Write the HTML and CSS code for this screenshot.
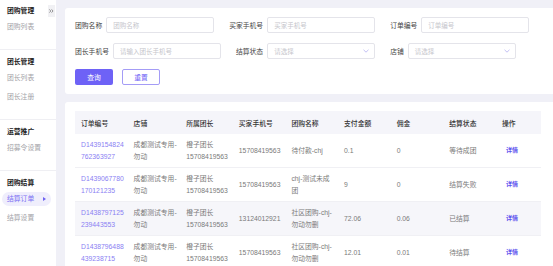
FILE: index.html
```html
<!DOCTYPE html>
<html lang="zh-CN">
<head>
  <meta charset="UTF-8">
  <title>结算订单</title>
  <link rel="stylesheet" href="styles.css">
</head>
<body>
  <!-- Sidebar -->
  <aside class="sidebar">
    <span class="collapse"><svg width="5" height="4" viewBox="0 0 5 4"><polyline points="0.4,0.4 1.8,2 0.4,3.6" fill="none" stroke="#555" stroke-width="0.6"/><polyline points="2.6,0.4 4,2 2.6,3.6" fill="none" stroke="#555" stroke-width="0.6"/></svg></span>
    <div class="nav-group">
      <div class="nav-title">团购管理</div>
      <div class="nav-item">团购列表</div>
    </div>
    <div class="nav-group">
      <div class="nav-title">团长管理</div>
      <div class="nav-item">团长列表</div>
      <div class="nav-item">团长注册</div>
    </div>
    <div class="nav-group">
      <div class="nav-title">运营推广</div>
      <div class="nav-item">招募令设置</div>
    </div>
    <div class="nav-group last">
      <div class="nav-title">团购结算</div>
      <div class="nav-item active">结算订单<span class="arrow"></span></div>
      <div class="nav-item">结算设置</div>
    </div>
  </aside>

  <main class="main">
    <!-- Search form -->
    <div class="card search">
      <div class="form-row">
        <div class="field"><label>团购名称</label><input placeholder="团购名称"></div>
        <div class="field"><label>买家手机号</label><input placeholder="买家手机号"></div>
        <div class="field"><label>订单编号</label><input placeholder="订单编号"></div>
      </div>
      <div class="form-row">
        <div class="field"><label>团长手机号</label><input placeholder="请输入团长手机号"></div>
        <div class="field">
          <label>结算状态</label>
          <div class="select">请选择<svg width="6" height="4" viewBox="0 0 6 4"><polyline points="0.5,0.8 3,3.2 5.5,0.8" fill="none" stroke="#b3aef0" stroke-width="0.8"/></svg></div>
        </div>
        <div class="field">
          <label>店铺</label>
          <div class="select">请选择<svg width="6" height="4" viewBox="0 0 6 4"><polyline points="0.5,0.8 3,3.2 5.5,0.8" fill="none" stroke="#b3aef0" stroke-width="0.8"/></svg></div>
        </div>
      </div>
      <div class="actions">
        <button class="btn primary">查询</button>
        <button class="btn ghost">重置</button>
      </div>
    </div>

    <!-- Result table -->
    <div class="card list">
      <table class="orders">
        <colgroup>
          <col><col><col><col><col><col><col><col><col class="op">
        </colgroup>
        <thead>
          <tr>
            <th>订单编号</th><th>店铺</th><th>所属团长</th><th>买家手机号</th><th>团购名称</th>
            <th>支付金额</th><th>佣金</th><th>结算状态</th><th>操作</th>
          </tr>
        </thead>
        <tbody>
          <tr>
            <td class="no">D1439154824762363927</td>
            <td>成都测试专用-勿动</td>
            <td>橙子团长<br>15708419563</td>
            <td>15708419563</td>
            <td>待付款-chj</td>
            <td>0.1</td>
            <td>0</td>
            <td>等待成团</td>
            <td><a class="link">详情</a></td>
          </tr>
          <tr>
            <td class="no">D1439067780170121235</td>
            <td>成都测试专用-勿动</td>
            <td>橙子团长<br>15708419563</td>
            <td>15708419563</td>
            <td>chj-测试未成团</td>
            <td>9</td>
            <td>0</td>
            <td>结算失败</td>
            <td><a class="link">详情</a></td>
          </tr>
          <tr class="stripe">
            <td class="no">D1438797125239443553</td>
            <td>成都测试专用-勿动</td>
            <td>橙子团长<br>15708419563</td>
            <td>13124012921</td>
            <td>社区团购-chj-勿动勿删</td>
            <td>72.06</td>
            <td>0.06</td>
            <td>已结算</td>
            <td><a class="link">详情</a></td>
          </tr>
          <tr>
            <td class="no">D1438796488439238715</td>
            <td>成都测试专用-勿动</td>
            <td>橙子团长<br>15708419563</td>
            <td>15708419563</td>
            <td>社区团购-chj-勿动勿删</td>
            <td>12.01</td>
            <td>0.01</td>
            <td>待结算</td>
            <td><a class="link">详情</a></td>
          </tr>
        </tbody>
      </table>
    </div>
  </main>
</body>
</html>
```

FILE: styles.css
```css
/* page layout */
body {
  margin: 0;
  display: flex;
  height: 100vh;
  overflow: hidden;
  background-color: #f0f0f7;
  font-family: "Liberation Sans", "Noto Sans CJK SC", sans-serif;
  font-size: 6.8px;
  color: #666;
}

.sidebar {
  position: relative;
  width: 56px;
  flex-shrink: 0;
  background-color: #fff;
}

.collapse {
  position: absolute;
  top: 5px;
  left: 48px;
  width: 7px;
  height: 12px;
  display: flex;
  align-items: center;
  justify-content: center;
  background-color: #f1f1f4;
}

.nav-group {
  padding: 6px 0 10px;
  border-bottom: 1px solid #efeff3;
}

.collapse + .nav-group {
  padding-top: 5px;
}

.nav-group.last {
  border-bottom: none;
}

.nav-title {
  line-height: 12px;
  margin: 0 0 3px 7px;
  font-weight: bold;
  color: #222;
}

.nav-item {
  position: relative;
  height: 14px;
  line-height: 14px;
  margin: 0 5px 5px 2px;
  padding-left: 5px;
  border-radius: 7px;
  color: #a3a3a8;
}

.nav-item.active {
  background-color: #efeefc;
  color: #7b6ff3;
}

.arrow {
  position: absolute;
  right: 5px;
  top: 5px;
  border-top: 2px solid transparent;
  border-bottom: 2px solid transparent;
  border-left: 3px solid #6d61f2;
}

.main {
  flex: 1;
  padding: 8px 0 0 9px;
  display: flex;
  flex-direction: column;
  gap: 8px;
  min-width: 0;
}

.card {
  background-color: #fff;
  border-radius: 3px 0 0 3px;
}

/* search form */
.search {
  padding: 9px 10px;
  display: flex;
  flex-direction: column;
  gap: 10px;
}

.form-row {
  display: flex;
  gap: 15px;
}

.field {
  display: flex;
  align-items: center;
  gap: 4px;
  color: #444;
}

.field label {
  white-space: nowrap;
}

.field input,
.select {
  box-sizing: border-box;
  width: 108px;
  height: 16px;
  padding: 0 6px;
  border: 1px solid #e4e4ea;
  border-radius: 2px;
  font-family: inherit;
  font-size: 6.5px;
  color: #c6c6cc;
  outline: none;
}

.field input::placeholder {
  color: #c6c6cc;
}

.select {
  display: flex;
  align-items: center;
  justify-content: space-between;
  padding-right: 5px;
}

.actions {
  display: flex;
  gap: 9px;
}

.btn {
  width: 38px;
  height: 16px;
  padding: 0;
  border-radius: 2px;
  font-family: inherit;
  font-size: 6.8px;
  cursor: pointer;
}

.btn.primary {
  background-color: #6e62f6;
  border: none;
  color: #fff;
}

.btn.ghost {
  background-color: #fff;
  border: 1px solid #a49cf6;
  color: #6e62f6;
}

/* table */
.list {
  flex: 1;
  padding: 9px 12px 0 10px;
}

.orders {
  width: 466px;
  table-layout: fixed;
  border-collapse: collapse;
}

.orders col {
  width: 52.6px;
}

.orders col.op {
  width: 45px;
}

.orders th {
  height: 23px;
  padding: 0 0 0 6px;
  text-align: left;
  font-weight: 500;
  color: #333;
  background-color: #f5f5fa;
}

.orders td {
  height: 23px;
  padding: 5px 3px 5px 6px;
  line-height: 11.5px;
  vertical-align: middle;
  border-bottom: 1px solid #f0f0f4;
  color: #7a7a7a;
}

.orders tr.stripe td {
  background-color: #f6f6fa;
}

.orders td.no {
  word-break: break-all;
  color: #8a80f3;
}

.link {
  padding-left: 4px;
  font-size: 6px;
  font-weight: bold;
  color: #5e53ee;
  cursor: pointer;
}
```
